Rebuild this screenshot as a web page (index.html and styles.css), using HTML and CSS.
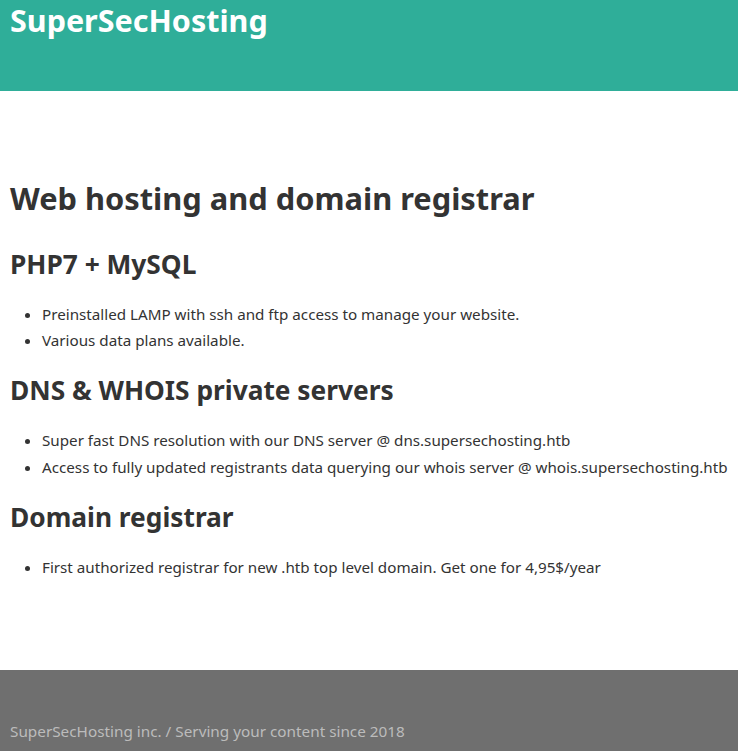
FILE: index.html
```html
<!DOCTYPE html>
<html>
<head>
<meta charset="utf-8">
<link rel="stylesheet" href="styles.css">
</head>
<body>
<header class="top">
  <div class="brand">SuperSecHosting</div>
</header>
<main class="content">
  <h1 class="title">Web hosting and domain registrar</h1>
  <h2 class="section">PHP7 + MySQL</h2>
  <ul class="list">
    <li>Preinstalled LAMP with ssh and ftp access to manage your website.</li>
    <li>Various data plans available.</li>
  </ul>
  <h2 class="section">DNS &amp; WHOIS private servers</h2>
  <ul class="list">
    <li>Super fast DNS resolution with our DNS server @ dns.supersechosting.htb</li>
    <li>Access to fully updated registrants data querying our whois server @ whois.supersechosting.htb</li>
  </ul>
  <h2 class="section">Domain registrar</h2>
  <ul class="list">
    <li>First authorized registrar for new .htb top level domain. Get one for 4,95$/year</li>
  </ul>
</main>
<footer class="bottom">
  <div class="foot-text">SuperSecHosting inc. / Serving your content since 2018</div>
</footer>
</body>
</html>
```
FILE: styles.css
```css
html, body {
  margin: 0;
  padding: 0;
}
body {
  font-family: "Noto Sans", "Open Sans", sans-serif;
  color: #333333;
  background: #ffffff;
}
.top {
  background: #2fae99;
  height: 91px;
  padding: 0 10px;
  box-sizing: border-box;
}
.brand {
  color: #ffffff;
  font-weight: bold;
  font-size: 30.5px;
  line-height: 40px;
}
.content {
  padding: 85px 0 0 10px;
  height: 579px;
  box-sizing: border-box;
}
.title {
  font-size: 30.8px;
  margin: 0 0 27px;
  line-height: 44px;
}
.section {
  font-size: 26.3px;
  margin: 0 0 20px;
  line-height: 34px;
}
.list {
  margin: 0 0 20px;
  padding-left: 32px;
  font-size: 15.2px;
  line-height: 26.2px;
}
.bottom {
  background: #6f6f6f;
  height: 81px;
  padding: 50px 10px 0;
  box-sizing: border-box;
}
.foot-text {
  color: #bcbcbc;
  font-size: 15.3px;
  line-height: 22px;
}
```
